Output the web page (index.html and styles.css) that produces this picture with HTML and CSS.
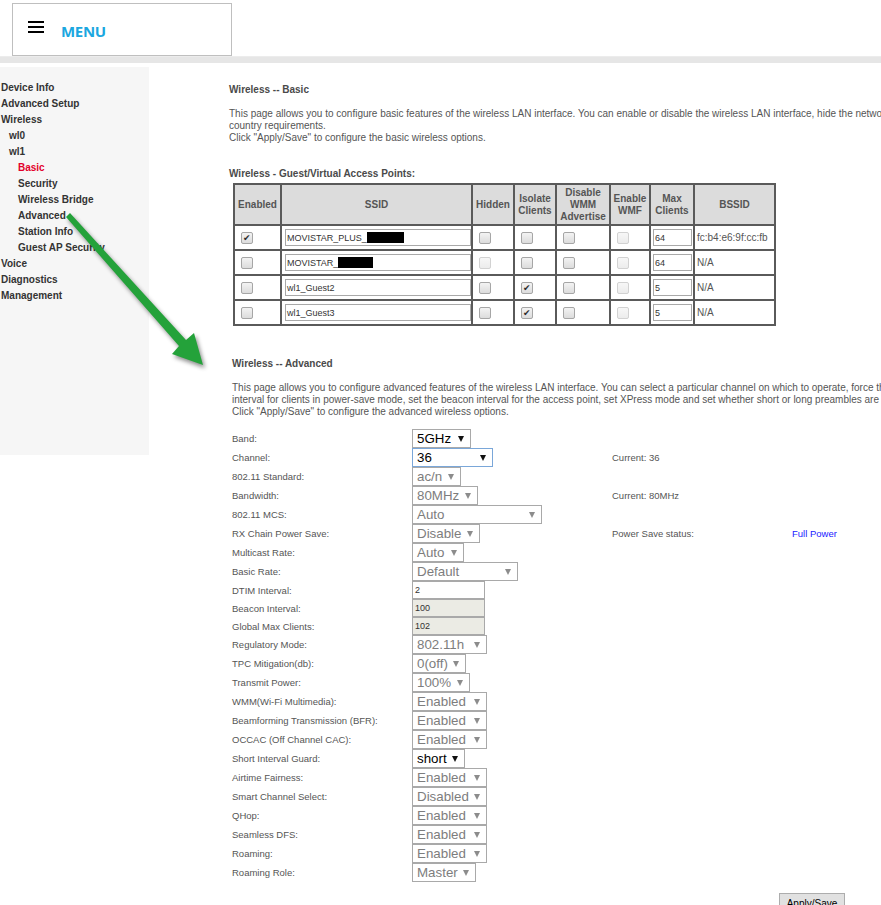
FILE: index.html
```html
<!DOCTYPE html>
<html lang="en">
<head>
<meta charset="utf-8">
<title>Wireless -- Advanced</title>
<link rel="stylesheet" href="styles.css">
</head>
<body>
<header class="header">
  <div class="menubox">
    <span class="burger"><i></i><i></i><i></i></span>
    <span class="menu">MENU</span>
  </div>
</header>
<div class="strip"></div>
<div class="layout">
  <nav class="side">
    <a class="l0">Device Info</a>
    <a class="l0">Advanced Setup</a>
    <a class="l0">Wireless</a>
    <a class="l1">wl0</a>
    <a class="l1">wl1</a>
    <a class="l2 active">Basic</a>
    <a class="l2">Security</a>
    <a class="l2">Wireless Bridge</a>
    <a class="l2">Advanced</a>
    <a class="l2">Station Info</a>
    <a class="l2">Guest AP Security</a>
    <a class="l0">Voice</a>
    <a class="l0">Diagnostics</a>
    <a class="l0">Management</a>
  </nav>
  <main class="main">
    <section class="basic">
      <h2 class="title">Wireless -- Basic</h2>
      <p class="desc">This page allows you to configure basic features of the wireless LAN interface. You can enable or disable the wireless LAN interface, hide the network from active scans, set the wireless network name (also known as SSID) and restrict the channel set based on<br>country requirements.<br>Click "Apply/Save" to configure the basic wireless options.</p>
      <h3 class="subtitle">Wireless - Guest/Virtual Access Points:</h3>
      <table class="ap">
        <colgroup>
          <col class="c-en"><col class="c-ssid"><col class="c-hid"><col class="c-iso"><col class="c-wmm"><col class="c-wmf"><col class="c-max"><col class="c-bssid">
        </colgroup>
        <thead>
          <tr><th>Enabled</th><th>SSID</th><th>Hidden</th><th>Isolate<br>Clients</th><th>Disable<br>WMM<br>Advertise</th><th>Enable<br>WMF</th><th>Max<br>Clients</th><th>BSSID</th></tr>
        </thead>
        <tbody>
          <tr>
            <td><input type="checkbox" class="cb" checked></td>
            <td><span class="tin ssid">MOVISTAR_PLUS_<b class="redact r1"></b></span></td>
            <td><input type="checkbox" class="cb"></td>
            <td><input type="checkbox" class="cb"></td>
            <td><input type="checkbox" class="cb"></td>
            <td><input type="checkbox" class="cb" disabled></td>
            <td><span class="tin max">64</span></td>
            <td class="mac">fc:b4:e6:9f:cc:fb</td>
          </tr>
          <tr>
            <td><input type="checkbox" class="cb"></td>
            <td><span class="tin ssid">MOVISTAR_<b class="redact r2"></b></span></td>
            <td><input type="checkbox" class="cb" disabled></td>
            <td><input type="checkbox" class="cb"></td>
            <td><input type="checkbox" class="cb"></td>
            <td><input type="checkbox" class="cb" disabled></td>
            <td><span class="tin max">64</span></td>
            <td class="mac">N/A</td>
          </tr>
          <tr>
            <td><input type="checkbox" class="cb"></td>
            <td><span class="tin ssid">wl1_Guest2</span></td>
            <td><input type="checkbox" class="cb"></td>
            <td><input type="checkbox" class="cb" checked></td>
            <td><input type="checkbox" class="cb"></td>
            <td><input type="checkbox" class="cb" disabled></td>
            <td><span class="tin max">5</span></td>
            <td class="mac">N/A</td>
          </tr>
          <tr>
            <td><input type="checkbox" class="cb"></td>
            <td><span class="tin ssid">wl1_Guest3</span></td>
            <td><input type="checkbox" class="cb"></td>
            <td><input type="checkbox" class="cb" checked></td>
            <td><input type="checkbox" class="cb"></td>
            <td><input type="checkbox" class="cb" disabled></td>
            <td><span class="tin max">5</span></td>
            <td class="mac">N/A</td>
          </tr>
        </tbody>
      </table>
    </section>

    <section class="adv">
      <h2 class="title">Wireless -- Advanced</h2>
      <p class="desc">This page allows you to configure advanced features of the wireless LAN interface. You can select a particular channel on which to operate, force the transmission rate to a particular speed, set the fragmentation threshold, set the RTS threshold, set the wakeup<br>interval for clients in power-save mode, set the beacon interval for the access point, set XPress mode and set whether short or long preambles are used.<br>Click "Apply/Save" to configure the advanced wireless options.</p>

      <div class="form">
        <div class="row"><span class="lbl">Band:</span><span class="sel w59">5GHz<i class="arr"></i></span></div>
        <div class="row"><span class="lbl">Channel:</span><span class="sel w81 focus">36<i class="arr"></i></span><span class="info">Current: 36</span></div>
        <div class="row"><span class="lbl">802.11 Standard:</span><span class="sel dis w49">ac/n<i class="arr"></i></span></div>
        <div class="row"><span class="lbl">Bandwidth:</span><span class="sel dis w66">80MHz<i class="arr"></i></span><span class="info">Current: 80MHz</span></div>
        <div class="row"><span class="lbl">802.11 MCS:</span><span class="sel dis w130">Auto<i class="arr"></i></span></div>
        <div class="row"><span class="lbl">RX Chain Power Save:</span><span class="sel dis w68">Disable<i class="arr"></i></span><span class="info">Power Save status:</span><span class="status">Full Power</span></div>
        <div class="row"><span class="lbl">Multicast Rate:</span><span class="sel dis w52">Auto<i class="arr"></i></span></div>
        <div class="row"><span class="lbl">Basic Rate:</span><span class="sel dis w106">Default<i class="arr"></i></span></div>
        <div class="row in"><span class="lbl">DTIM Interval:</span><span class="txt">2</span></div>
        <div class="row in"><span class="lbl">Beacon Interval:</span><span class="txt ro">100</span></div>
        <div class="row in"><span class="lbl">Global Max Clients:</span><span class="txt ro">102</span></div>
        <div class="row"><span class="lbl">Regulatory Mode:</span><span class="sel dis w75">802.11h<i class="arr"></i></span></div>
        <div class="row"><span class="lbl">TPC Mitigation(db):</span><span class="sel dis w54">0(off)<i class="arr"></i></span></div>
        <div class="row"><span class="lbl">Transmit Power:</span><span class="sel dis w58">100%<i class="arr"></i></span></div>
        <div class="row"><span class="lbl">WMM(Wi-Fi Multimedia):</span><span class="sel dis w75">Enabled<i class="arr"></i></span></div>
        <div class="row"><span class="lbl">Beamforming Transmission (BFR):</span><span class="sel dis w75">Enabled<i class="arr"></i></span></div>
        <div class="row"><span class="lbl">OCCAC (Off Channel CAC):</span><span class="sel dis w75">Enabled<i class="arr"></i></span></div>
        <div class="row"><span class="lbl">Short Interval Guard:</span><span class="sel w53">short<i class="arr"></i></span></div>
        <div class="row"><span class="lbl">Airtime Fairness:</span><span class="sel dis w75">Enabled<i class="arr"></i></span></div>
        <div class="row"><span class="lbl">Smart Channel Select:</span><span class="sel dis w75">Disabled<i class="arr"></i></span></div>
        <div class="row"><span class="lbl">QHop:</span><span class="sel dis w75">Enabled<i class="arr"></i></span></div>
        <div class="row"><span class="lbl">Seamless DFS:</span><span class="sel dis w75">Enabled<i class="arr"></i></span></div>
        <div class="row"><span class="lbl">Roaming:</span><span class="sel dis w75">Enabled<i class="arr"></i></span></div>
        <div class="row"><span class="lbl">Roaming Role:</span><span class="sel dis w64">Master<i class="arr"></i></span></div>
      </div>
      <div class="actions"><button class="btn" type="button">Apply/Save</button></div>
    </section>
  </main>
</div>
<svg class="arrow" width="881" height="905" viewBox="0 0 881 905" aria-hidden="true">
  <polygon points="66,217 179,346 172,354 203,365 194,333 186,340 70,213" fill="#24a23a"/>
</svg>
</body>
</html>
```

FILE: styles.css
```css
html, body {
  margin: 0;
  padding: 0;
  overflow: hidden;
  background: #ffffff;
}
body {
  width: 881px;
  height: 905px;
  position: relative;
  font-family: "Liberation Sans", Arial, sans-serif;
  font-size: 10px;
  color: #4d4d4d;
}

/* header */
.header {
  height: 56px;
  padding: 3px 0 0 12px;
  box-sizing: border-box;
}
.menubox {
  width: 220px;
  height: 53px;
  box-sizing: border-box;
  border: 1px solid #bfbfbf;
  display: flex;
  align-items: flex-start;
}
.burger {
  display: flex;
  flex-direction: column;
  gap: 3px;
  margin: 17px 0 0 15px;
  width: 16px;
}
.burger i {
  display: block;
  height: 2px;
  background: #000;
}
.menu {
  margin: 17px 0 0 17px;
  font-family: "Open Sans", "Liberation Sans", sans-serif;
  font-weight: 700;
  font-size: 15px;
  line-height: 20px;
  color: #1ba7e0;
  letter-spacing: -0.3px;
}
.strip {
  height: 7px;
  background: #e6e6e6;
  border-top: 1px solid #ececec;
  box-sizing: border-box;
}

/* layout */
.layout {
  display: flex;
  align-items: flex-start;
  margin-top: 4px;
}
.side {
  width: 149px;
  height: 388px;
  flex: none;
  background: #f6f6f6;
  padding-top: 13px;
  box-sizing: border-box;
  display: flex;
  flex-direction: column;
}
.side a {
  display: block;
  font-weight: 700;
  font-size: 10px;
  line-height: 16px;
  color: #333333;
  white-space: nowrap;
}
.side .l0 { padding-left: 1px; }
.side .l1 { padding-left: 9px; }
.side .l2 { padding-left: 18px; }
.side .active { color: #e3002b; }

.main {
  flex: none;
  margin-left: 80px;
  padding-top: 17px;
}
.title {
  margin: 0;
  font-size: 10px;
  line-height: 12px;
  font-weight: 700;
  color: #4a4a4a;
}
.desc {
  margin: 12px 0 0;
  font-size: 10px;
  line-height: 12px;
  white-space: nowrap;
  color: #555555;
}
.subtitle {
  margin: 24px 0 0;
  font-size: 10px;
  line-height: 12px;
  font-weight: 700;
  color: #4a4a4a;
}

/* table */
.ap {
  margin: 3px 0 0 4px;
  border-collapse: collapse;
  table-layout: fixed;
  width: 541px;
  border: 2px solid #5a5a5a;
}
.c-en { width: 47px; }
.c-ssid { width: 191px; }
.c-hid { width: 42px; }
.c-iso { width: 42px; }
.c-wmm { width: 54px; }
.c-wmf { width: 40px; }
.c-max { width: 44px; }
.c-bssid { width: 81px; }
.ap th {
  height: 39px;
  padding: 0;
  background: #dcdcdc;
  border: 2px solid #5a5a5a;
  font-size: 10px;
  line-height: 12px;
  font-weight: 700;
  color: #555555;
  text-align: center;
}
.ap td {
  height: 23px;
  padding: 0 2px;
  border: 2px solid #5a5a5a;
  vertical-align: middle;
  white-space: nowrap;
}
.cb {
  appearance: none;
  -webkit-appearance: none;
  display: block;
  position: relative;
  width: 12px;
  height: 12px;
  margin: 0 0 0 4px;
  box-sizing: border-box;
  border: 1px solid #a6a6a6;
  border-radius: 2px;
  background: linear-gradient(#f3f3f3, #dcdcdc);
}
.cb:disabled {
  border-color: #d2d2d2;
  background: linear-gradient(#f7f7f7, #ececec);
}
.cb:checked::after {
  content: "\2714";
  position: absolute;
  left: 1px;
  top: -1px;
  font-family: "DejaVu Sans", sans-serif;
  font-size: 9px;
  line-height: 12px;
  color: #2b2b2b;
}
.tin {
  display: flex;
  align-items: center;
  height: 17px;
  box-sizing: border-box;
  border: 1px solid #a9a9a9;
  padding-left: 1px;
  font-size: 9px;
  color: #333333;
  background: #fff;
}
.tin.ssid { width: 186px; margin-left: 1px; }
.tin.max { width: 39px; }
.redact {
  display: inline-block;
  height: 11px;
  background: #000;
}
.redact.r1 { width: 37px; }
.redact.r2 { width: 35px; }
.mac {
  font-size: 10px;
  color: #555555;
}

/* advanced */
.adv {
  margin-top: 32px;
  padding-left: 3px;
}
.adv .desc {
  margin-top: 12px;
}
.form {
  margin-top: 11px;
}
.row {
  display: grid;
  grid-template-columns: 180px 200px 180px auto;
  align-items: center;
  height: 19px;
}
.row.in { height: 18px; }
.lbl, .info {
  font-size: 9.5px;
  color: #555555;
  white-space: nowrap;
}
.status {
  font-size: 9.5px;
  color: #1a1aff;
}
.sel {
  display: flex;
  align-items: center;
  height: 19px;
  box-sizing: border-box;
  border: 1px solid #a9a9a9;
  padding-left: 4px;
  font-size: 13.33px;
  color: #000;
  background: #fff;
  white-space: nowrap;
}
.sel.focus { border-color: #7aa7d9; }
.sel .arr {
  margin-left: auto;
  margin-right: 6px;
  width: 0;
  height: 0;
  border-left: 3.5px solid transparent;
  border-right: 3.5px solid transparent;
  border-top: 6px solid #111;
}
.sel.dis { color: #7d7d7d; }
.sel.dis .arr { border-top-color: #8c8c8c; }
.w49 { width: 49px; }
.w52 { width: 52px; }
.w53 { width: 53px; }
.w54 { width: 54px; }
.w58 { width: 58px; }
.w59 { width: 59px; }
.w64 { width: 64px; }
.w66 { width: 66px; }
.w68 { width: 68px; }
.w75 { width: 75px; }
.w81 { width: 81px; }
.w106 { width: 106px; }
.w130 { width: 130px; }
.txt {
  display: flex;
  align-items: center;
  width: 73px;
  height: 18px;
  box-sizing: border-box;
  border: 1px solid #a9a9a9;
  padding-left: 2px;
  font-size: 9px;
  color: #333;
  background: #fff;
}
.txt.ro { background: #ebebe4; }
.actions {
  margin-top: 11px;
  padding-left: 547px;
}
.btn {
  width: 66px;
  height: 21px;
  padding: 0;
  border: 1px solid #adadad;
  background: #e1e1e1;
  font-family: "Liberation Sans", Arial, sans-serif;
  font-size: 10px;
  color: #000;
}

.arrow {
  position: absolute;
  left: 0;
  top: 0;
  pointer-events: none;
  filter: drop-shadow(2px 3px 2px rgba(0, 0, 0, 0.45));
}
```
